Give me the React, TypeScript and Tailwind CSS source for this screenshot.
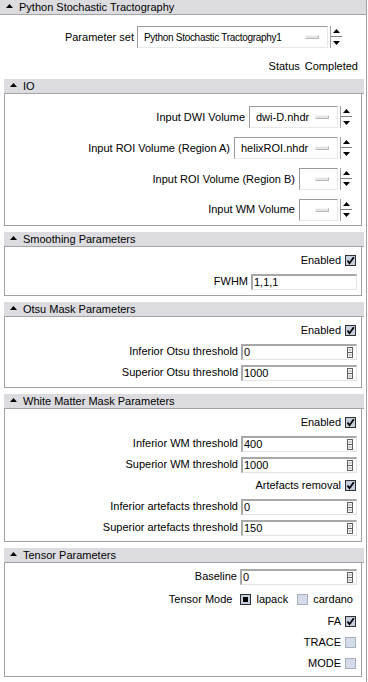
import React from "react";

const Tri = ({ down = false }: { down?: boolean }) => (
  <svg width="7" height="4" viewBox="0 0 7 4">
    <path d={down ? "M0 0 L7 0 L3.5 4Z" : "M0 4 L3.5 0 L7 4Z"} fill="#000" />
  </svg>
);

function Header({ title, main = false }: { title: string; main?: boolean }) {
  return (
    <div
      className={
        "h-[15px] bg-[#dcdce0] border-b border-[#a4a4a8] flex items-center shrink-0 " +
        (main ? "" : "ml-[4px] mr-[2px]")
      }
    >
      <div className="w-[19px] pl-[6px] flex items-center pb-[2px]">
        <Tri />
      </div>
      <span className="leading-none">{title}</span>
    </div>
  );
}

function Box({ children, className = "" }: { children: React.ReactNode; className?: string }) {
  return (
    <div className={"ml-[4px] mr-[4px] border-l border-r border-b border-[#a0a0a0] flex flex-col shrink-0 " + className}>
      {children}
    </div>
  );
}

function Arrows() {
  return (
    <div className="flex flex-col w-[12px] h-[22px] ml-[2px] border-l border-[#a0a0a0]">
      <div className="h-[11px] flex items-center justify-center border-b border-[#808080] bg-white">
        <Tri />
      </div>
      <div className="h-[11px] flex items-center justify-center bg-white">
        <Tri down />
      </div>
    </div>
  );
}

function Combo({ text, w, small = false }: { text: string; w: number; small?: boolean }) {
  return (
    <div
      className="h-[22px] bg-white border-t border-l border-[#9a9a9a] border-b border-r border-b-[#e8e8e8] border-r-[#e8e8e8] flex items-center pl-[6px] pr-[8px] justify-between overflow-hidden"
      style={{ width: w }}
    >
      <span className={"whitespace-nowrap " + (small ? "text-[10px] tracking-[-0.3px]" : "")}>{text}</span>
      <div className="w-[14px] h-[4px] shrink-0 bg-[#e4e4e4] border border-[#b8b8b8] border-t-[#f4f4f4] border-l-[#f4f4f4]" />
    </div>
  );
}

function ComboRow({ label, text, w }: { label: string; text: string; w: number }) {
  return (
    <div className="h-[31px] flex items-center justify-end pr-[9px]">
      <span className="mr-[4px] whitespace-nowrap">{label}</span>
      <Combo text={text} w={w} />
      <Arrows />
    </div>
  );
}

const SpinIcon = () => (
  <svg width="6" height="11" viewBox="0 0 6 11" className="shrink-0">
    <rect x="0.5" y="0.5" width="5" height="10" fill="#f4f4f4" stroke="#606060" />
    <line x1="1" y1="5.5" x2="5" y2="5.5" stroke="#606060" />
    <line x1="1.5" y1="3" x2="4.5" y2="3" stroke="#a0a0a0" />
    <line x1="1.5" y1="8" x2="4.5" y2="8" stroke="#a0a0a0" />
  </svg>
);

function Field({ value, w, spin = false }: { value: string; w: number; spin?: boolean }) {
  return (
    <div
      className="h-[16px] bg-white border-t-2 border-l-2 border-[#a8a8a8] border-b border-r border-b-[#e4e4e4] border-r-[#e4e4e4] flex items-center pl-[1px] pr-[3px] justify-between"
      style={{ width: w }}
    >
      <span className="leading-none">{value}</span>
      {spin && <SpinIcon />}
    </div>
  );
}

function FieldRow({ label, value, spin = true, w = 116 }: { label: string; value: string; spin?: boolean; w?: number }) {
  return (
    <div className="h-[21px] flex items-center justify-end pr-[4px]">
      <span className="mr-[3px] whitespace-nowrap">{label}</span>
      <Field value={value} w={w} spin={spin} />
    </div>
  );
}

function Check({ checked }: { checked: boolean }) {
  return checked ? (
    <svg width="11" height="11" viewBox="0 0 11 11" className="shrink-0">
      <rect x="0.5" y="0.5" width="10" height="10" fill="#c4cfe0" stroke="#303030" />
      <path d="M2.5 5.5 L4.5 8.3 L8.8 2.3" fill="none" stroke="#000" strokeWidth="1.8" />
    </svg>
  ) : (
    <svg width="11" height="11" viewBox="0 0 11 11" className="shrink-0">
      <rect x="0.5" y="0.5" width="10" height="10" fill="#d4dcea" stroke="#a8b0c0" />
    </svg>
  );
}

function Radio({ on }: { on: boolean }) {
  return on ? (
    <svg width="11" height="11" viewBox="0 0 11 11" className="shrink-0">
      <rect x="0.5" y="0.5" width="10" height="10" fill="#c4cfe0" stroke="#303030" />
      <rect x="3" y="3" width="5" height="5" fill="#000" />
    </svg>
  ) : (
    <svg width="11" height="11" viewBox="0 0 11 11" className="shrink-0">
      <rect x="0.5" y="0.5" width="10" height="10" fill="#d4dcea" stroke="#a8b0c0" />
    </svg>
  );
}

function CheckRow({ label, checked, h = 21 }: { label: string; checked: boolean; h?: number }) {
  return (
    <div className="flex items-center justify-end pr-[5px]" style={{ height: h }}>
      <span className="mr-[4px] whitespace-nowrap">{label}</span>
      <Check checked={checked} />
    </div>
  );
}

export default function App() {
  return (
    <div
      className="w-[368px] h-[682px] bg-white text-black text-[11px] overflow-hidden"
      style={{ fontFamily: '"Liberation Sans", Arial, sans-serif' }}
    >
      <div className="w-[367px] h-[682px] border-r border-[#a0a0a0] flex flex-col">
        <Header title="Python Stochastic Tractography" main />
        <div className="h-[11px] shrink-0" />
        <div className="h-[22px] shrink-0 flex items-center justify-end pr-[24px]">
          <span className="mr-[3px]">Parameter set</span>
          <Combo text="Python Stochastic Tractography1" w={191} small />
          <Arrows />
        </div>
        <div className="h-[12px] shrink-0 mt-[12px] flex items-center justify-end pr-[8px]">
          <span className="mr-[5px]">Status</span>
          <span>Completed</span>
        </div>
        <div className="h-[7px] shrink-0" />

        <Header title="IO" />
        <Box className="h-[132px] pt-[8px]">
          <ComboRow label="Input DWI Volume" text="dwi-D.nhdr" w={89} />
          <ComboRow label="Input ROI Volume (Region A)" text="helixROI.nhdr" w={104} />
          <ComboRow label="Input ROI Volume (Region B)" text="" w={39} />
          <ComboRow label="Input WM Volume" text="" w={39} />
        </Box>
        <div className="h-[6px] shrink-0" />

        <Header title="Smoothing Parameters" />
        <Box className="h-[49px] pt-[3px]">
          <CheckRow label="Enabled" checked />
          <FieldRow label="FWHM" value="1,1,1" spin={false} w={106} />
        </Box>
        <div className="h-[6px] shrink-0" />

        <Header title="Otsu Mask Parameters" />
        <Box className="h-[71px] pt-[3px]">
          <CheckRow label="Enabled" checked />
          <FieldRow label="Inferior Otsu threshold" value="0" />
          <FieldRow label="Superior Otsu threshold" value="1000" />
        </Box>
        <div className="h-[6px] shrink-0" />

        <Header title="White Matter Mask Parameters" />
        <Box className="h-[133px] pt-[3px]">
          <CheckRow label="Enabled" checked />
          <FieldRow label="Inferior WM threshold" value="400" />
          <FieldRow label="Superior WM threshold" value="1000" />
          <CheckRow label="Artefacts removal" checked />
          <FieldRow label="Inferior artefacts threshold" value="0" />
          <FieldRow label="Superior artefacts threshold" value="150" />
        </Box>
        <div className="h-[6px] shrink-0" />

        <Header title="Tensor Parameters" />
        <Box className="h-[114px] pt-[3px]">
          <FieldRow label="Baseline" value="0" w={117} />
          <div className="h-[24px] flex items-center justify-end pr-[8px]">
            <span className="mr-[8px]">Tensor Mode</span>
            <Radio on />
            <span className="ml-[5px] mr-[9px]">lapack</span>
            <Radio on={false} />
            <span className="ml-[5px]">cardano</span>
          </div>
          <CheckRow label="FA" checked />
          <CheckRow label="TRACE" checked={false} />
          <CheckRow label="MODE" checked={false} />
        </Box>
      </div>
    </div>
  );
}
